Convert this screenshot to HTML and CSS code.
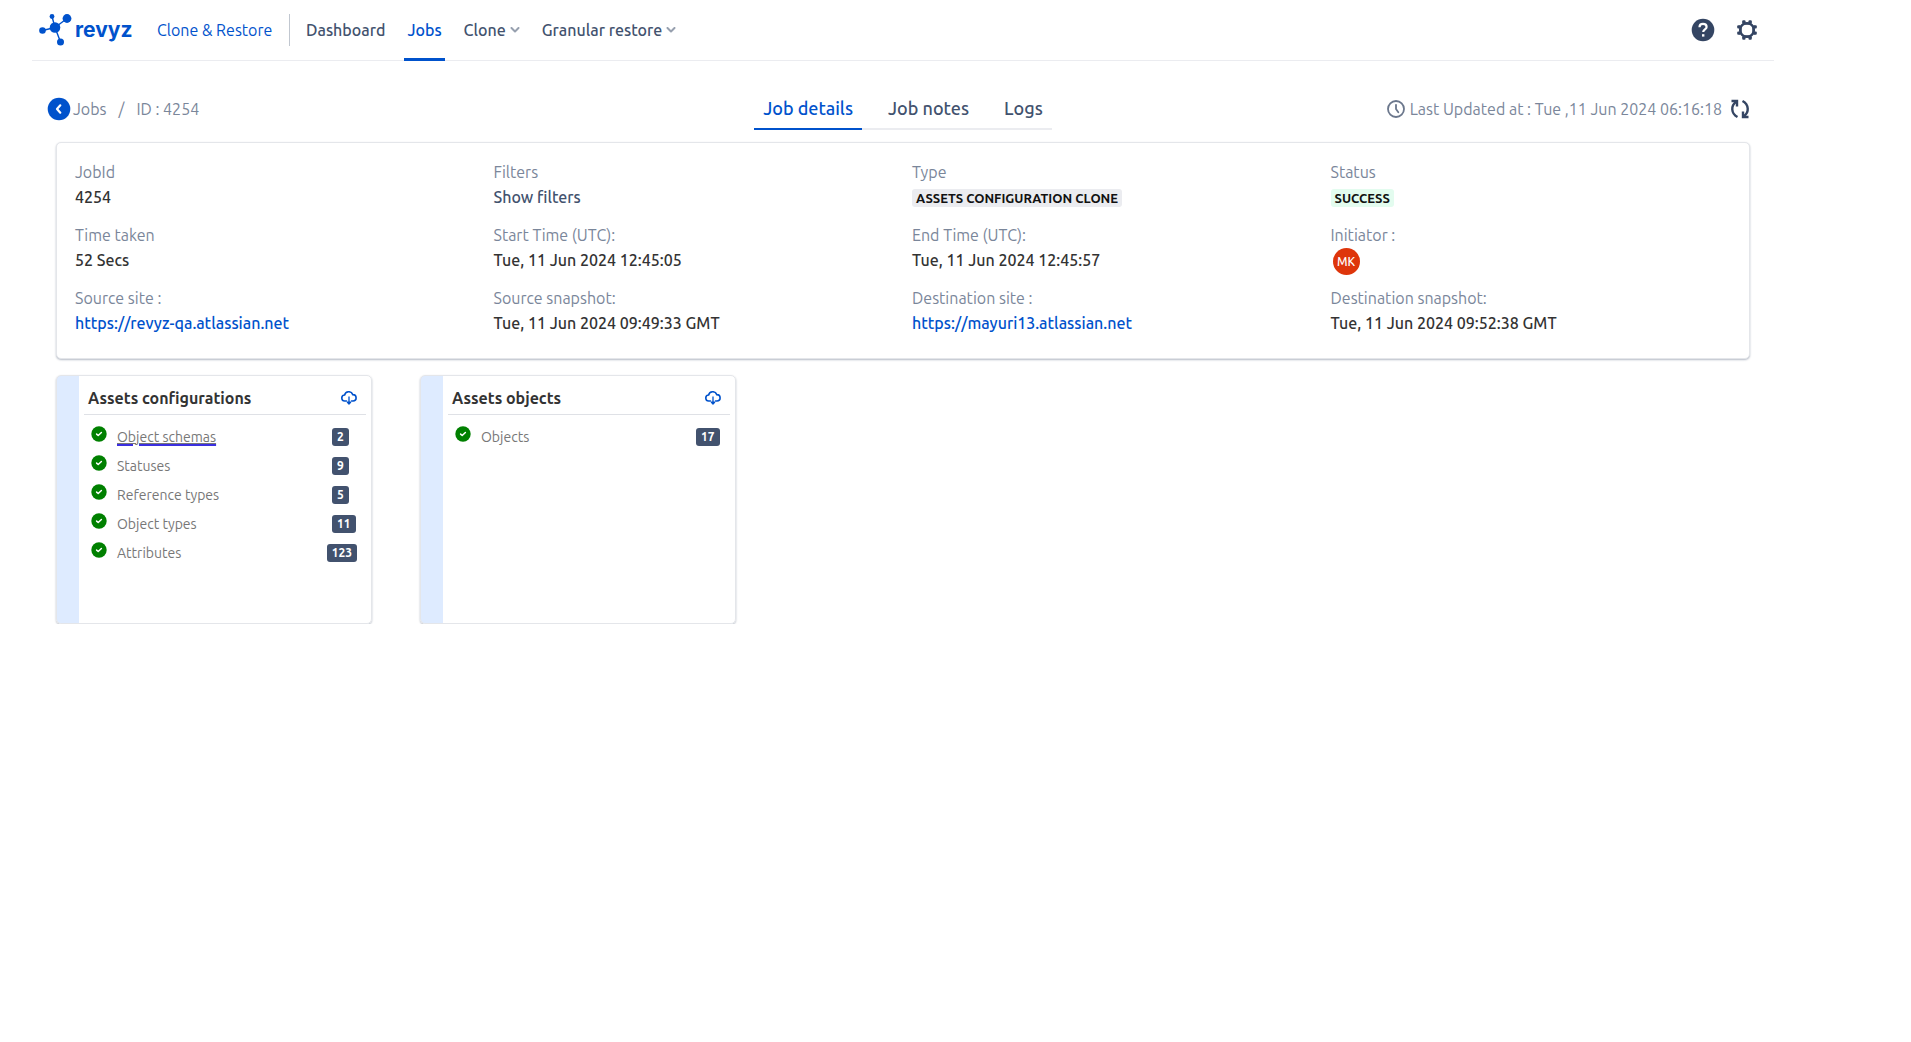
FILE: index.html
```html
<!DOCTYPE html>
<html lang="en">
<head>
<meta charset="utf-8">
<meta name="viewport" content="width=device-width, initial-scale=1">
<title>Revyz - Job 4254</title>
<link rel="stylesheet" href="styles.css">
</head>
<body>
<svg class="defs" aria-hidden="true">
  <symbol id="chevron" viewBox="0 0 10 6"><path d="M1.500 1 5 4.500 8.500 1" fill="none" stroke="currentColor" stroke-width="2" stroke-linecap="round" stroke-linejoin="round"/></symbol>
  <symbol id="check" viewBox="0 0 16 16"><circle cx="8" cy="8" r="7.700" fill="#008000"/><path d="M5.600 8.100 7.200 9.500 10.400 6.500" fill="none" stroke="#fff" stroke-width="1.500" stroke-linecap="round" stroke-linejoin="round"/></symbol>
  <symbol id="cloud" viewBox="0 0 16 14"><path d="M5.500 10H4a3 3 0 0 1-.4-6A4.300 4.300 0 0 1 11.800 3.600 3.200 3.200 0 0 1 12 10h-1.500" fill="none" stroke="currentColor" stroke-width="1.600" stroke-linecap="round"/><path d="M8 5.500V12M6.400 11.200l1.600 1.800 1.600-1.800z" fill="currentColor" stroke="currentColor" stroke-width="1.300" stroke-linejoin="round"/></symbol>
</svg>
<div class="page">
  <header class="topbar">
    <a class="logo" href="#">
      <svg width="34" height="32" viewBox="0 0 34 32" aria-hidden="true">
        <g fill="#0052cc" stroke="#0052cc">
          <path d="M16 13.500 3.500 16.500M16 13.500 13 2.500M16 13.500 28 4.500M16 13.500 21.500 28" stroke-width="1.400"/>
          <g stroke="none"><circle cx="16" cy="13.500" r="5.300"/><circle cx="3.500" cy="16.500" r="3.300"/><circle cx="13" cy="2.500" r="2.400"/><circle cx="28" cy="4.500" r="4.400"/><circle cx="21.500" cy="28" r="3.500"/></g>
        </g>
      </svg>
      <span class="wordmark">revyz</span>
    </a>
    <a class="product" href="#">Clone &amp; Restore</a>
    <nav class="nav" aria-label="Main">
      <a class="nav-item" href="#">Dashboard</a>
      <a class="nav-item active" href="#" aria-current="page">Jobs</a>
      <button class="nav-item" type="button">Clone<svg class="chevron"><use href="#chevron"/></svg></button>
      <button class="nav-item" type="button">Granular restore<svg class="chevron"><use href="#chevron"/></svg></button>
    </nav>
    <div class="tools">
      <button class="icon-button" type="button" aria-label="Help">
        <svg width="24" height="24" viewBox="0 0 24 24"><circle cx="12" cy="12" r="11.300" fill="#344563"/><path d="M8.500 9.200C8.500 7 10 5.900 12 5.900s3.600 1.200 3.600 3.100c0 2.400-3.400 2.500-3.400 5" fill="none" stroke="#fff" stroke-width="2.200"/><rect x="11" y="16.200" width="2.400" height="2.400" fill="#fff"/></svg>
      </button>
      <button class="icon-button" type="button" aria-label="Settings">
        <svg width="24" height="24" viewBox="0 0 24 24"><circle cx="12" cy="12" r="6.900" fill="none" stroke="#344563" stroke-width="2.400"/><g fill="#344563"><g id="teeth"><rect x="7.200" y="2.200" width="3.300" height="3.600" rx="1"/><rect x="13.500" y="2.200" width="3.300" height="3.600" rx="1"/><path d="M7.300 4.500h9.400l-1 2.200H8.300z"/></g><use href="#teeth" transform="rotate(90 12 12)"/><use href="#teeth" transform="rotate(180 12 12)"/><use href="#teeth" transform="rotate(270 12 12)"/></g></svg>
      </button>
    </div>
  </header>

  <main class="content">
    <div class="subbar">
      <nav class="crumbs" aria-label="Breadcrumb">
        <a class="back" href="#"><svg width="24" height="24" viewBox="0 0 24 24" aria-hidden="true"><circle cx="12" cy="12" r="11.300" fill="#0052cc"/><path d="M13.300 8.300 10 12l3.300 3.700" fill="none" stroke="#fff" stroke-width="2.200" stroke-linecap="round" stroke-linejoin="round"/></svg>Jobs</a>
        <span>/</span>
        <span>ID : 4254</span>
      </nav>
      <div class="tabs" role="tablist">
        <button class="tab selected" type="button" role="tab" aria-selected="true">Job details</button>
        <button class="tab" type="button" role="tab" aria-selected="false">Job notes</button>
        <button class="tab" type="button" role="tab" aria-selected="false">Logs</button>
      </div>
      <div class="updated">
        <svg width="18" height="18" viewBox="0 0 18 18" aria-hidden="true"><circle cx="9" cy="9" r="8" fill="none" stroke="#6b778c" stroke-width="1.800"/><path d="M9 4.800V9l2.300 3.200" fill="none" stroke="#6b778c" stroke-width="1.800" stroke-linecap="round"/></svg>
        <span class="updated-text">Last Updated at : Tue ,11 Jun 2024 06:16:18</span>
        <button class="icon-button" type="button" aria-label="Refresh">
          <svg width="20" height="20" viewBox="0 0 20 20" fill="none" stroke="#344563" stroke-width="2.400"><path d="M7.500 18C.8 14.500.8 6.500 6 3"/><path d="M1.500 2H7v5.500"/><path d="M12.500 2c6.700 3.500 6.700 11.500 1.500 15"/><path d="M18.500 18H13v-5.500"/></svg>
        </button>
      </div>
    </div>

    <section class="panel details" aria-label="Job details">
      <dl class="grid">
        <div class="field"><dt>JobId</dt><dd>4254</dd></div>
        <div class="field"><dt>Filters</dt><dd><button class="text-button" type="button">Show filters</button></dd></div>
        <div class="field"><dt>Type</dt><dd><span class="lozenge">ASSETS CONFIGURATION CLONE</span></dd></div>
        <div class="field"><dt>Status</dt><dd><span class="lozenge success">SUCCESS</span></dd></div>
        <div class="field"><dt>Time taken</dt><dd>52 Secs</dd></div>
        <div class="field"><dt>Start Time (UTC):</dt><dd>Tue, 11 Jun 2024 12:45:05</dd></div>
        <div class="field"><dt>End Time (UTC):</dt><dd>Tue, 11 Jun 2024 12:45:57</dd></div>
        <div class="field"><dt>Initiator :</dt><dd><span class="avatar">MK</span></dd></div>
        <div class="field"><dt>Source site :</dt><dd><a href="#">https://revyz-qa.atlassian.net</a></dd></div>
        <div class="field"><dt>Source snapshot:</dt><dd>Tue, 11 Jun 2024 09:49:33 GMT</dd></div>
        <div class="field"><dt>Destination site :</dt><dd><a href="#">https://mayuri13.atlassian.net</a></dd></div>
        <div class="field"><dt>Destination snapshot:</dt><dd>Tue, 11 Jun 2024 09:52:38 GMT</dd></div>
      </dl>
    </section>

    <div class="cards">
      <section class="panel card">
        <header class="card-head"><h2>Assets configurations</h2><button class="icon-button" type="button" aria-label="Download"><svg class="cloud"><use href="#cloud"/></svg></button></header>
        <ul class="items">
          <li><svg class="check"><use href="#check"/></svg><a class="item-link" href="#"><span>Object schemas</span></a><span class="slot"><span class="badge">2</span></span></li>
          <li><svg class="check"><use href="#check"/></svg><span>Statuses</span><span class="slot"><span class="badge">9</span></span></li>
          <li><svg class="check"><use href="#check"/></svg><span>Reference types</span><span class="slot"><span class="badge">5</span></span></li>
          <li><svg class="check"><use href="#check"/></svg><span>Object types</span><span class="slot"><span class="badge">11</span></span></li>
          <li><svg class="check"><use href="#check"/></svg><span>Attributes</span><span class="slot"><span class="badge">123</span></span></li>
        </ul>
      </section>
      <section class="panel card">
        <header class="card-head"><h2>Assets objects</h2><button class="icon-button" type="button" aria-label="Download"><svg class="cloud"><use href="#cloud"/></svg></button></header>
        <ul class="items">
          <li><svg class="check"><use href="#check"/></svg><span>Objects</span><span class="slot"><span class="badge">17</span></span></li>
        </ul>
      </section>
    </div>
  </main>
</div>
</body>
</html>
```
FILE: styles.css
```css
* { box-sizing: border-box; }

body {
  margin: 0;
  background: #fff;
  color: #333;
  font: 400 16px/24px Ubuntu, "Noto Sans", sans-serif;
}

a { color: #0052cc; text-decoration: none; }

button {
  padding: 0;
  border: 0;
  background: none;
  color: inherit;
  font: inherit;
  cursor: pointer;
}

svg { display: block; flex: none; }
.defs { display: none; }

.page { margin: 0 137px 0 32px; }

/* Top bar */
.topbar {
  display: flex;
  align-items: center;
  height: 61px;
  padding: 0 15px 0 7px;
  border-bottom: 1px solid #ebecf0;
}

.logo { display: flex; align-items: center; gap: 2px; width: 118px; }
.wordmark { font: 700 21px/30px Inter, sans-serif; }

.product {
  width: 133px;
  border-right: 1px solid #c1c7d0;
  line-height: 32px;
  white-space: nowrap;
}

.nav { display: flex; align-self: stretch; gap: 16px; margin: 0 auto -1px 13px; }

.nav-item {
  display: flex;
  align-items: center;
  gap: 4px;
  padding: 0 3px;
  border-bottom: 3px solid transparent;
  border-top: 1px solid transparent;
  color: #42526e;
  font-weight: 500;
  white-space: nowrap;
}
.nav-item.active { border-bottom-color: #0052cc; color: #0052cc; }

.chevron { width: 10px; height: 6px; color: #97a0af; }

.tools { display: flex; gap: 20px; }
.icon-button { display: flex; }

/* Breadcrumb, tabs and last update */
.content { padding: 0 24px; }

.subbar {
  display: grid;
  grid-template-columns: 1fr auto 1fr;
  align-items: center;
  height: 81px;
  padding-top: 15px;
  color: #7a869a;
}

.crumbs { display: flex; align-items: center; gap: 12px; margin-left: -9px; }
.back { display: flex; align-items: center; gap: 2px; color: inherit; }

.tabs { display: flex; margin-top: 4px; border-bottom: 2px solid #ebecf0; }

.tab {
  margin-bottom: -2px;
  padding: 4px 9px 8px;
  border-bottom: 2px solid transparent;
  color: #42526e;
  font-size: 18px;
  font-weight: 500;
}
.tab + .tab { margin-left: 17px; }
.tab.selected { border-bottom-color: #0052cc; color: #0052cc; }

.updated { display: flex; align-items: center; justify-content: flex-end; gap: 5px; }
.updated-text { margin-right: 3px; white-space: nowrap; }

/* Panels */
.panel {
  border: 1px solid #e4e6ea;
  border-radius: 5px;
  background: #fff;
  box-shadow: 0 1px 2px rgba(9, 30, 66, 0.3);
}

.details { padding: 17px 0 22px 18px; }

.grid {
  display: grid;
  grid-template-columns: repeat(4, 1fr);
  row-gap: 13px;
  margin: 0;
}

.field { height: 50px; white-space: nowrap; }
.field dt { height: 25px; color: #7a869a; }
.field dd { display: flex; align-items: center; height: 23px; margin: 0; font-weight: 500; }

.text-button { color: #42526e; }

.lozenge {
  margin-top: 3px;
  padding: 0 4px;
  border-radius: 3px;
  background: #ebecf0;
  color: #111;
  font-size: 13px;
  font-weight: 700;
  line-height: 18px;
}
.lozenge.success { background: #e3fcef; }

.avatar {
  width: 27px;
  margin: 4px 0 0 2px;
  border-radius: 50%;
  background: #de350b;
  color: #fff;
  font-size: 12px;
  line-height: 27px;
  text-align: center;
}

/* Result cards */
.cards { display: flex; flex-wrap: wrap; gap: 48px; margin-top: 16px; }

.card {
  width: 316px;
  min-height: 249px;
  padding: 0 5px 0 27px;
  background: linear-gradient(to right, #deebff 22px, #fff 22px);
}

.card-head {
  display: flex;
  align-items: center;
  justify-content: space-between;
  height: 39px;
  padding: 6px 9px 0 4px;
  border-bottom: 1px solid #dfe1e6;
}
.card-head h2 { margin: 0; font-size: 16px; font-weight: 600; }

.cloud { width: 16px; height: 14px; color: #0052cc; }

.items {
  display: grid;
  gap: 5px;
  margin: 0;
  padding: 10px 9px 0 7px;
  list-style: none;
  color: #777;
  font-size: 14px;
}
.items li { display: flex; align-items: center; gap: 10px; }

.check { width: 16px; height: 16px; margin-bottom: 6px; }

.item-link { color: inherit; text-decoration: underline 2px #3b2fe0; text-underline-offset: 2px; }
.item-link span { text-decoration: underline 1px #777; text-underline-offset: 1px; }

.slot { display: flex; min-width: 25px; margin-left: auto; }

.badge {
  padding: 0 5px;
  border-radius: 3px;
  background: #42526e;
  color: #fff;
  font-size: 12px;
  font-weight: 700;
  line-height: 18px;
}
```
